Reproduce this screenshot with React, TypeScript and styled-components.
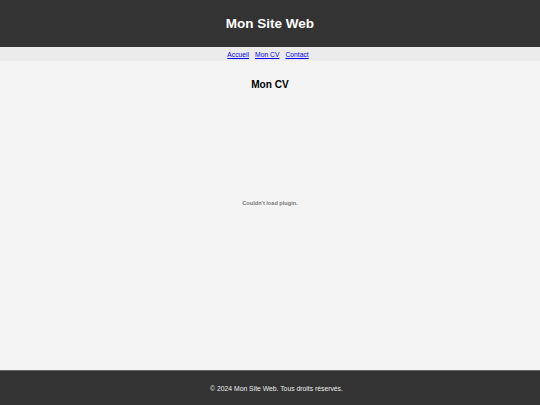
import React from "react";
import styled, { createGlobalStyle } from "styled-components";

const GlobalStyle = createGlobalStyle`
  html, body {
    margin: 0;
    padding: 0;
    background: #f4f4f4;
    font-family: "Liberation Sans", Arial, sans-serif;
  }
`;

const Page = styled.div`
  display: flex;
  flex-direction: column;
  min-height: 405px;
`;

const Header = styled.header`
  height: 47px;
  background: #333333;
  color: #ffffff;
  display: flex;
  align-items: center;
  justify-content: center;
`;

const Title = styled.h1`
  margin: 0;
  font-size: 13.5px;
  font-weight: 700;
`;

const Nav = styled.nav`
  height: 14px;
  padding-right: 4px;
  background: #ebebeb;
  display: flex;
  align-items: center;
  justify-content: center;
  gap: 6px;
`;

const NavLink = styled.a`
  font-size: 6.75px;
  color: #0000ee;
  text-decoration: underline;
`;

const Main = styled.main`
  flex: 1;
  display: flex;
  flex-direction: column;
  align-items: center;
  background: #f4f4f4;
`;

const Heading = styled.h2`
  margin: 18px 0 0;
  font-size: 10.1px;
  font-weight: 700;
  color: #000000;
`;

const PluginBox = styled.div`
  width: 100%;
  height: 222px;
  display: flex;
  align-items: center;
  justify-content: center;
  margin-top: 2px;
`;

const PluginText = styled.span`
  font-size: 5.6px;
  font-weight: 700;
  color: #777777;
`;

const Footer = styled.footer`
  height: 34px;
  padding-left: 13px;
  border-top: 1px solid #666666;
  background: #333333;
  color: #eeeeee;
  display: flex;
  align-items: center;
  justify-content: center;
  font-size: 6.8px;
`;

export default function App() {
  return (
    <>
      <GlobalStyle />
      <Page>
        <Header>
          <Title>Mon Site Web</Title>
        </Header>
        <Nav>
          <NavLink href="#">Accueil</NavLink>
          <NavLink href="#">Mon CV</NavLink>
          <NavLink href="#">Contact</NavLink>
        </Nav>
        <Main>
          <Heading>Mon CV</Heading>
          <PluginBox>
            <PluginText>Couldn't load plugin.</PluginText>
          </PluginBox>
        </Main>
        <Footer>© 2024 Mon Site Web. Tous droits réservés.</Footer>
      </Page>
    </>
  );
}
